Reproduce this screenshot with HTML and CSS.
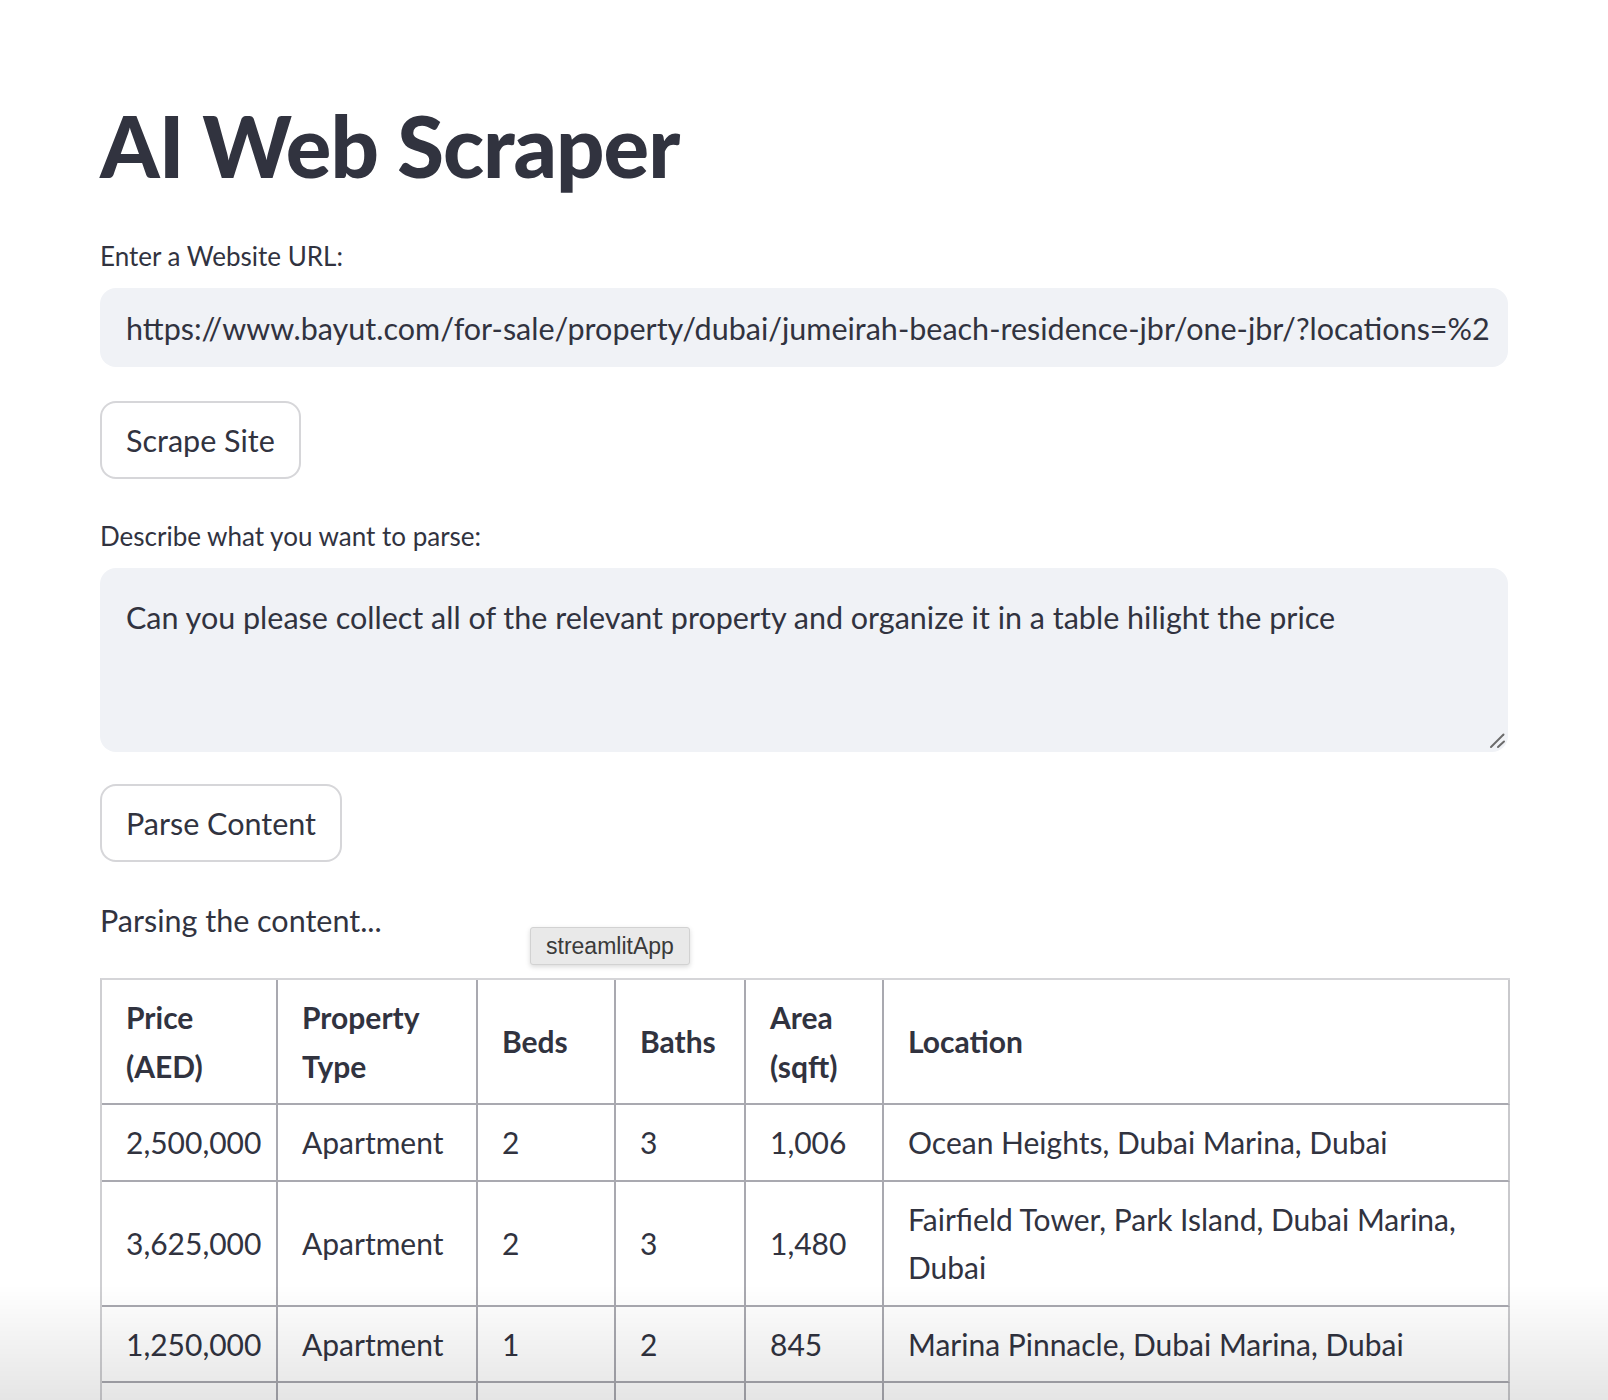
FILE: index.html
```html
<!DOCTYPE html>
<html lang="en">
<head>
<meta charset="utf-8">
<title>AI Web Scraper</title>
<link rel="stylesheet" href="styles.css">
</head>
<body>
<main class="main">
  <h1 class="title">AI Web Scraper</h1>

  <div class="field field-url">
    <label class="label">Enter a Website URL:</label>
    <div class="text-input">https://www.bayut.com/for-sale/property/dubai/jumeirah-beach-residence-jbr/one-jbr/?locations=%2</div>
  </div>

  <div class="field">
    <button class="btn">Scrape Site</button>
  </div>

  <div class="field field-text">
    <label class="label">Describe what you want to parse:</label>
    <div class="area-wrap">
      <textarea class="text-area">Can you please collect all of the relevant property and organize it in a table hilight the price</textarea>
      <svg class="grip" width="20" height="20" viewBox="0 0 20 20" aria-hidden="true">
        <line x1="3" y1="15" x2="15.5" y2="2.5" />
        <line x1="10" y1="15" x2="16" y2="9.5" />
      </svg>
    </div>
  </div>

  <div class="field">
    <button class="btn">Parse Content</button>
  </div>

  <div class="field field-status status-wrap">
    <p class="status">Parsing the content...</p>
    <span class="tooltip">streamlitApp</span>
  </div>

  <table class="data">
    <colgroup>
      <col class="c1"><col class="c2"><col class="c3"><col class="c4"><col class="c5"><col class="c6">
    </colgroup>
    <thead>
      <tr><th>Price (AED)</th><th>Property Type</th><th>Beds</th><th>Baths</th><th>Area (sqft)</th><th>Location</th></tr>
    </thead>
    <tbody>
      <tr><td>2,500,000</td><td>Apartment</td><td>2</td><td>3</td><td>1,006</td><td>Ocean Heights, Dubai Marina, Dubai</td></tr>
      <tr><td>3,625,000</td><td>Apartment</td><td>2</td><td>3</td><td>1,480</td><td>Fairfield Tower, Park Island, Dubai Marina, Dubai</td></tr>
      <tr><td>1,250,000</td><td>Apartment</td><td>1</td><td>2</td><td>845</td><td>Marina Pinnacle, Dubai Marina, Dubai</td></tr>
      <tr><td>1,900,000</td><td>Apartment</td><td>2</td><td>2</td><td>1,150</td><td>Marina Gate, Dubai Marina, Dubai</td></tr>
    </tbody>
  </table>
</main>
<div class="bottom-fade"></div>
</body>
</html>
```

FILE: styles.css
```css
* { box-sizing: border-box; }

html, body {
  margin: 0;
  padding: 0;
  background: #ffffff;
  color: #31333f;
  font-family: Lato, "Noto Sans", sans-serif;
  overflow: hidden;
  height: 1400px;
}

.main {
  width: 1408px;
  margin: 0 auto;
  padding-top: 87px;
}

.title {
  margin: 0;
  padding: 0 0 32px 0;
  height: 145px;
  font-size: 85px;
  line-height: 116px;
  font-weight: 900;
  letter-spacing: -1px;
  color: #31333f;
}

.field {
  margin-bottom: 33px;
}

.field-url {
  margin-bottom: 34px;
}

.field-text {
  margin-bottom: 32px;
}

.field-status {
  margin-bottom: 32px;
}

.label {
  display: flex;
  align-items: center;
  height: 48px;
  margin-bottom: 8px;
  font-size: 26px;
  color: #31333f;
}

.text-input {
  height: 79px;
  background: #f0f2f6;
  border-radius: 16px;
  padding: 0 20px 0 26px;
  display: flex;
  align-items: center;
  font-size: 30.5px;
  white-space: nowrap;
  overflow: hidden;
}

.btn {
  display: block;
  height: 78px;
  padding: 0 24px;
  background: #ffffff;
  border: 2px solid rgba(49, 51, 63, 0.2);
  border-radius: 16px;
  font-family: inherit;
  font-size: 30.5px;
  color: #31333f;
}

.area-wrap {
  position: relative;
}

.text-area {
  display: block;
  width: 100%;
  height: 184px;
  background: #f0f2f6;
  border: none;
  border-radius: 16px;
  padding: 24px 26px;
  font-family: inherit;
  font-size: 30.5px;
  line-height: 50px;
  color: #31333f;
  resize: none;
  outline: none;
}

.grip {
  position: absolute;
  right: 0;
  bottom: 0;
  stroke: #6b6b6b;
  stroke-width: 2;
  stroke-linecap: round;
  pointer-events: none;
}

.status-wrap {
  position: relative;
}

.status {
  margin: 0;
  height: 51px;
  line-height: 51px;
  font-size: 30.5px;
}

.tooltip {
  position: absolute;
  left: 430px;
  top: 32px;
  height: 38px;
  padding: 0 15px;
  display: flex;
  align-items: center;
  background: #e9e9e9;
  border: 1px solid #d2d2d2;
  border-radius: 3px;
  box-shadow: 0 2px 5px rgba(0, 0, 0, 0.15);
  font-family: "Liberation Sans", Arial, sans-serif;
  font-size: 23px;
  color: #3a3a3a;
}

.data {
  width: 1408px;
  table-layout: fixed;
  border-collapse: separate;
  border-spacing: 0;
  border-top: 2px solid #d5d5d8;
  border-left: 2px solid #cfcfd2;
  font-size: 30px;
  color: #31333f;
}

.c1 { width: 176px; }
.c2 { width: 200px; }
.c3 { width: 138px; }
.c4 { width: 130px; }
.c5 { width: 138px; }
.c6 { width: 626px; }

.data th,
.data td {
  padding: 13px 24px;
  line-height: 48.5px;
  text-align: left;
  vertical-align: middle;
  border-right: 2px solid #a9a9b0;
  border-bottom: 2px solid #a9a9b0;
}

.data th:last-child,
.data td:last-child {
  border-right-color: #c9c9cc;
}

.data th {
  font-weight: 700;
}

.bottom-fade {
  position: fixed;
  left: 0;
  right: 0;
  bottom: 0;
  height: 115px;
  background: linear-gradient(to bottom, rgba(0, 0, 0, 0), rgba(0, 0, 0, 0.1));
  pointer-events: none;
}
```
